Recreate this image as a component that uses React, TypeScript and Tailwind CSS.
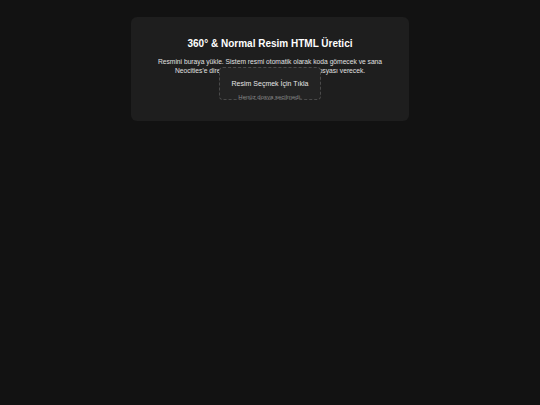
export default function App() {
  return (
    <div className="min-h-[405px] bg-[#121212] pt-[17px] font-['Liberation_Sans',Arial,sans-serif]">
      {/* Card */}
      <div className="mx-auto flex w-[278px] flex-col items-center rounded-md bg-[#1e1e1e] px-[20px] pt-[20px] pb-[21px]">
        <h1 className="text-center text-[10px] leading-[14px] font-bold text-white">
          360° &amp; Normal Resim HTML Üretici
        </h1>
        <p className="mt-[6px] text-center text-[6.7px] leading-[9px] text-[#e0e0e0]">
          Resmini buraya yükle. Sistem resmi otomatik olarak koda gömecek ve sana Neocities'e direkt yükleyebileceğin hazır HTML dosyası verecek.
        </p>

        {/* Upload box, sits over the end of the text */}
        <label className="relative z-10 -mt-[8px] flex h-[33px] w-[102px] cursor-pointer flex-col items-center rounded-[4px] border border-dashed border-[#4a4a4a] bg-[#232323] pt-[11px]">
          <span className="text-[7px] leading-[9px] text-[#e6e6e6]">Resim Seçmek İçin Tıkla</span>
          <span className="mt-[5px] text-[6px] leading-[8px] text-[#8a8a8a]">Henüz dosya seçilmedi.</span>
        </label>
      </div>
    </div>
  );
}
